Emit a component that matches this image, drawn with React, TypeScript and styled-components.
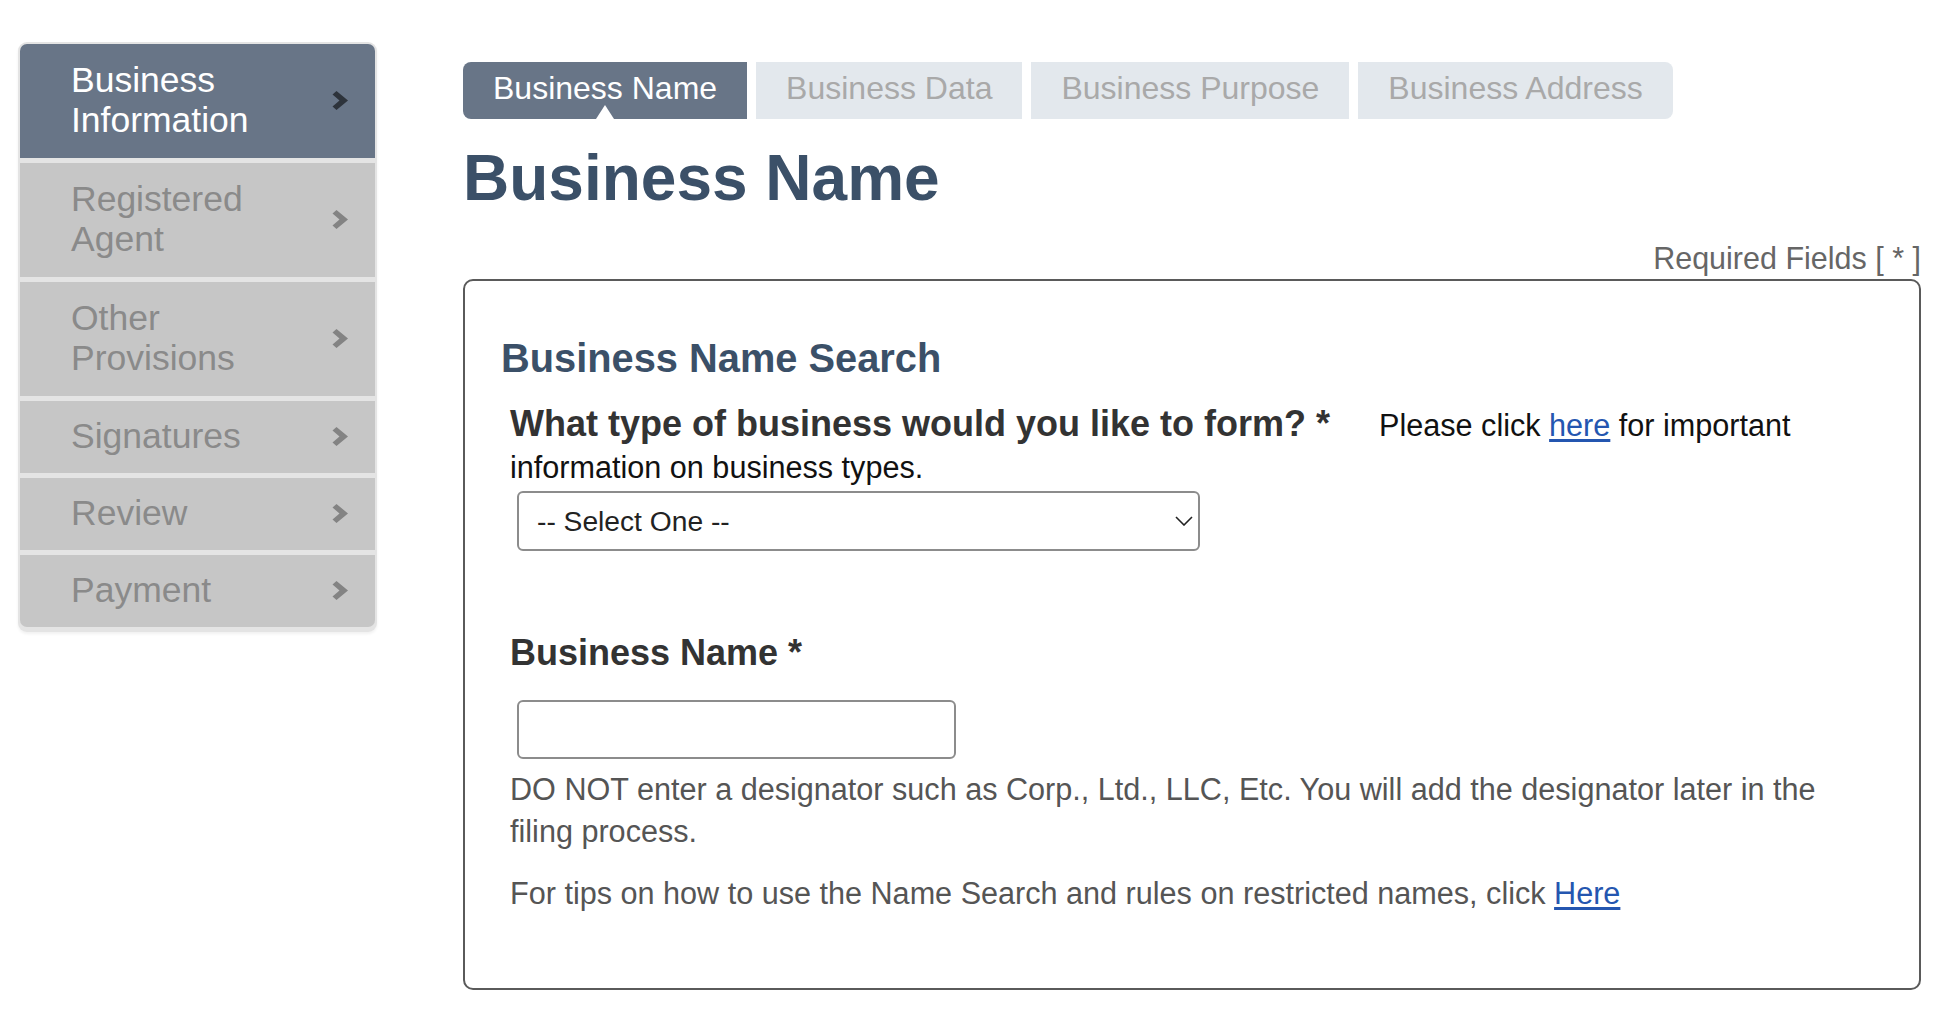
import React, { useState } from "react";
import styled, { createGlobalStyle } from "styled-components";

const GlobalStyle = createGlobalStyle`
  body {
    margin: 0;
    background: #ffffff;
    font-family: "Liberation Sans", Arial, Helvetica, sans-serif;
  }
`;

const Page = styled.div`
  display: flex;
  align-items: flex-start;
  gap: 86px;
  padding: 42px 0 0 18px;
`;

const Sidebar = styled.nav`
  width: 359px;
  box-sizing: border-box;
  display: flex;
  flex-direction: column;
  gap: 5px;
  padding: 2px 2px 5px;
  background: #e4e4e4;
  border-radius: 9px;
  box-shadow: 0 2px 3px rgba(0, 0, 0, 0.06);
`;

const NavItem = styled.div<{ $active?: boolean; $tall?: boolean }>`
  display: flex;
  align-items: center;
  justify-content: space-between;
  height: ${(p) => (p.$tall ? "114px" : "72px")};
  padding: 0 26px 2px 51px;
  box-sizing: border-box;
  background: ${(p) => (p.$active ? "#687587" : "#c6c6c6")};
  color: ${(p) => (p.$active ? "#ffffff" : "#8a8a8a")};
  font-size: 35.5px;
  line-height: 40px;
  cursor: pointer;

  &:first-child {
    border-radius: 7px 7px 0 0;
  }
  &:last-child {
    border-radius: 0 0 7px 7px;
  }
`;

const NavLabel = styled.span<{ $tall?: boolean }>`
  width: ${(p) => (p.$tall ? "230px" : "auto")};
`;

const Chevron = ({ color }: { color: string }) => (
  <svg width="17" height="19" viewBox="0 0 17 19">
    <polygon points="0.5,3.5 4.5,0 16,9.5 4.5,19 0.5,15.5 7.5,9.5" fill={color} />
  </svg>
);

const Main = styled.main`
  width: 1458px;
  margin-top: 20px;
`;

const Tabs = styled.div`
  display: flex;
  gap: 9px;
`;

const Tab = styled.div<{ $active?: boolean }>`
  position: relative;
  height: 57px;
  box-sizing: border-box;
  display: flex;
  align-items: center;
  padding: 0 30px 4px;
  font-size: 32px;
  background: ${(p) => (p.$active ? "#687587" : "#e3e8ed")};
  color: ${(p) => (p.$active ? "#ffffff" : "#a9a9a9")};

  &:first-child {
    border-radius: 8px 0 0 8px;
  }
  &:last-child {
    border-radius: 0 8px 8px 0;
  }
`;

const TabPointer = styled.span`
  position: absolute;
  left: 50%;
  bottom: 0;
  transform: translateX(-50%);
  width: 0;
  height: 0;
  border-left: 9px solid transparent;
  border-right: 9px solid transparent;
  border-bottom: 14px solid #ffffff;
`;

const Title = styled.h1`
  margin: 22px 0 0;
  font-size: 64px;
  line-height: 74px;
  font-weight: bold;
  color: #3b5068;
`;

const Required = styled.div`
  margin-top: 26px;
  text-align: right;
  font-size: 30.5px;
  line-height: 34px;
  color: #666666;
`;

const FormBox = styled.section`
  margin-top: 4px;
  border: 2px solid #5a5a5a;
  border-radius: 10px;
  padding: 55px 36px 74px;
`;

const SectionTitle = styled.h3`
  margin: 0;
  font-size: 39.8px;
  line-height: 45px;
  font-weight: bold;
  color: #3b5068;
`;

const FieldGroup = styled.div<{ $gap: number }>`
  margin-top: ${(p) => p.$gap}px;
  padding-left: 9px;
`;

const Intro = styled.div`
  font-size: 30.6px;
  line-height: 42px;
  color: #111111;
`;

const FieldLabel = styled.label`
  display: block;
  font-size: 36px;
  line-height: 43px;
  font-weight: bold;
  color: #333333;
`;

const InlineLabel = styled(FieldLabel)`
  display: inline;
  margin-right: 49px;
`;

const Link = styled.a`
  color: #2456b0;
  text-decoration: underline;
  text-underline-offset: 3px;
  cursor: pointer;
`;

const SelectWrap = styled.div`
  position: relative;
  width: 683px;
  margin: 3px 0 0 7px;
`;

const Select = styled.select`
  width: 100%;
  height: 60px;
  box-sizing: border-box;
  appearance: none;
  border: 2px solid #8c8c8c;
  border-radius: 6px;
  background: #ffffff;
  padding: 0 40px 0 18px;
  font-family: inherit;
  font-size: 28.2px;
  color: #222222;
`;

const SelectArrow = styled.svg`
  position: absolute;
  right: 7px;
  top: 50%;
  transform: translateY(-50%);
  pointer-events: none;
`;

const TextInput = styled.input`
  display: block;
  width: 439px;
  height: 59px;
  box-sizing: border-box;
  margin: 26px 0 0 7px;
  border: 2px solid #8c8c8c;
  border-radius: 6px;
  font-family: inherit;
  font-size: 28px;
  padding: 0 14px;
`;

const Help = styled.p<{ $gap: number }>`
  margin: ${(p) => p.$gap}px 0 0;
  max-width: 1350px;
  font-size: 30.6px;
  line-height: 42px;
  color: #555555;
`;

const steps = [
  { label: "Business Information", tall: true },
  { label: "Registered Agent", tall: true },
  { label: "Other Provisions", tall: true },
  { label: "Signatures", tall: false },
  { label: "Review", tall: false },
  { label: "Payment", tall: false },
];

const tabs = ["Business Name", "Business Data", "Business Purpose", "Business Address"];

export default function App() {
  const [activeStep] = useState(0);
  const [activeTab] = useState(0);
  const [name, setName] = useState("");

  return (
    <>
      <GlobalStyle />
      <Page>
        <Sidebar>
          {steps.map((s, i) => (
            <NavItem key={s.label} $active={i === activeStep} $tall={s.tall}>
              <NavLabel $tall={s.tall}>{s.label}</NavLabel>
              <Chevron color={i === activeStep ? "#2d333b" : "#838383"} />
            </NavItem>
          ))}
        </Sidebar>

        <Main>
          <Tabs>
            {tabs.map((t, i) => (
              <Tab key={t} $active={i === activeTab}>
                {t}
                {i === activeTab && <TabPointer />}
              </Tab>
            ))}
          </Tabs>

          <Title>Business Name</Title>
          <Required>Required Fields [ * ]</Required>

          <FormBox>
            <SectionTitle>Business Name Search</SectionTitle>

            <FieldGroup $gap={21}>
              <Intro>
                <InlineLabel>What type of business would you like to form? *</InlineLabel>
                Please click <Link>here</Link> for important information on business types.
              </Intro>
              <SelectWrap>
                <Select defaultValue="">
                  <option value="">-- Select One --</option>
                  <option>Corporation</option>
                  <option>Limited Liability Company</option>
                  <option>Limited Partnership</option>
                </Select>
                <SelectArrow width="18" height="10" viewBox="0 0 18 10">
                  <polyline points="1,1 9,9 17,1" fill="none" stroke="#222" strokeWidth="1.6" />
                </SelectArrow>
              </SelectWrap>
            </FieldGroup>

            <FieldGroup $gap={80}>
              <FieldLabel>Business Name *</FieldLabel>
              <TextInput value={name} onChange={(e) => setName(e.target.value)} />
              <Help $gap={9}>
                DO NOT enter a designator such as Corp., Ltd., LLC, Etc. You will add the designator later in
                the filing process.
              </Help>
              <Help $gap={20}>
                For tips on how to use the Name Search and rules on restricted names, click <Link>Here</Link>
              </Help>
            </FieldGroup>
          </FormBox>
        </Main>
      </Page>
    </>
  );
}
